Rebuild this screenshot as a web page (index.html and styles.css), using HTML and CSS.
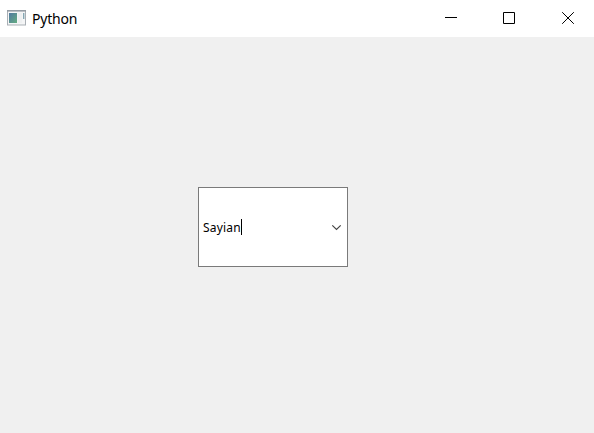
FILE: index.html
```html
<!DOCTYPE html>
<html lang="en">
<head>
<meta charset="utf-8">
<title>Python</title>
<link rel="stylesheet" href="styles.css">
</head>
<body>
<div class="window">
  <header class="titlebar">
    <svg class="app-icon" width="19" height="16" viewBox="0 0 19 16" aria-hidden="true">
      <defs>
        <linearGradient id="pane" x1="0" y1="0" x2="1" y2="1">
          <stop offset="0" stop-color="#5279a0"/>
          <stop offset="1" stop-color="#64ad82"/>
        </linearGradient>
      </defs>
      <rect x=".5" y=".5" width="18" height="14.5" fill="#f4f5f6" stroke="#a9afb5"/>
      <path d="M0 .8H19" stroke="#949ca4" stroke-width="1.6"/>
      <rect x="2" y="3" width="8" height="10" fill="url(#pane)"/>
      <rect x="11" y="3" width="4" height="10" fill="#eef0f1"/>
      <rect x="16" y="3" width="1.4" height="6" fill="#86a7b3"/>
    </svg>
    <h1 class="title">Python</h1>
    <div class="controls">
      <svg class="control" width="12" height="12" viewBox="0 0 12 12"><path d="M0 5.5H12"/></svg>
      <svg class="control" width="12" height="12" viewBox="0 0 12 12"><path d="M.5 .5H11.5V11.5H.5Z"/></svg>
      <svg class="control close" width="12" height="12" viewBox="0 0 12 12"><path d="M.2 .2L11.8 11.8M11.8 .2L.2 11.8"/></svg>
    </div>
  </header>
  <main class="content">
    <div class="combo">
      <span class="value">Sayian</span><span class="caret"></span>
      <svg class="arrow" width="9" height="5" viewBox="0 0 9 5"><path d="M.3 .4L4.5 4.4L8.7 .4"/></svg>
    </div>
  </main>
</div>
</body>
</html>
```

FILE: styles.css
```css
* { box-sizing: border-box; }
body { margin: 0; }
.window {
  display: flex;
  flex-direction: column;
  height: 433px;
  background: #f0f0f0;
  color: #000;
  font-family: "Noto Sans", "Open Sans", sans-serif;
}
.titlebar {
  display: flex;
  align-items: flex-start;
  height: 37px;
  padding-left: 7px;
  background: #fff;
}
.app-icon { margin-top: 10px; }
.title {
  margin: 9px 0 0 6px;
  font-size: 14px;
  font-weight: 400;
  line-height: 20px;
  letter-spacing: -0.2px;
}
.controls {
  display: flex;
  gap: 46px;
  margin: 12px 20px 0 auto;
}
.control, .arrow { fill: none; stroke: #000; }
.close { margin-left: 1px; }
.content { flex: 1; padding: 150px 0 0 198px; }
.combo {
  display: flex;
  align-items: center;
  width: 150px;
  height: 80px;
  padding: 0 6px 0 4px;
  border: 1px solid #7a7a7a;
  background: #fff;
}
.value {
  padding-top: 1px;
  font-size: 12px;
  line-height: 16px;
  letter-spacing: 0.2px;
}
.caret { width: 1px; height: 16px; background: #000; }
.arrow { overflow: visible; margin: 1px 0 0 auto; stroke: #444; stroke-width: 1.2; }
```
